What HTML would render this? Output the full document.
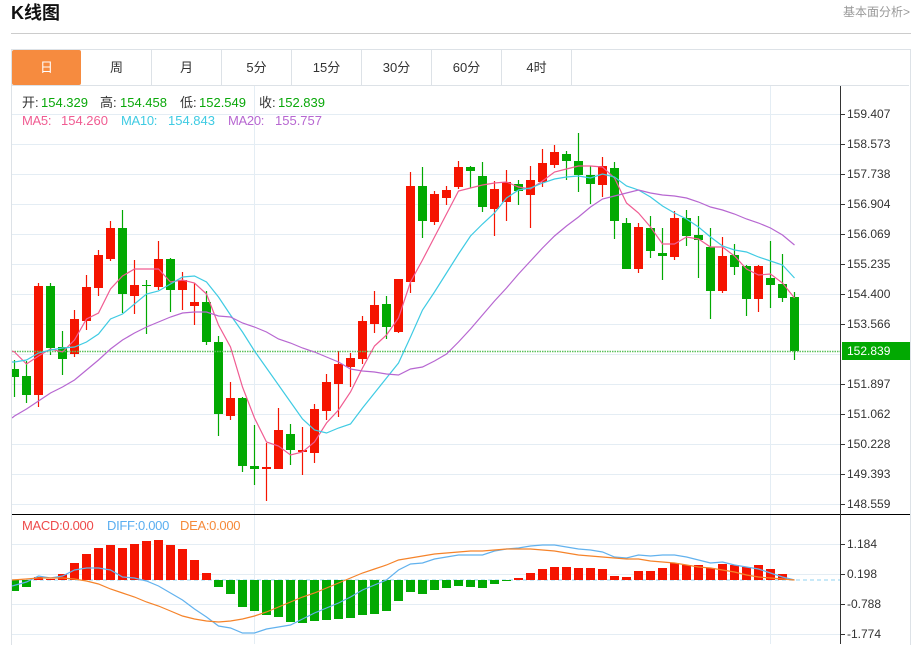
<!DOCTYPE html>
<html lang="zh">
<head>
<meta charset="utf-8">
<title>K线图</title>
<style>
html,body{margin:0;padding:0;background:#fff;width:916px;height:644px;overflow:hidden;font-family:"Liberation Sans","Noto Sans CJK SC",sans-serif;}
.abs{position:absolute;white-space:nowrap;}
.title{left:11px;top:1px;font-size:18px;line-height:24px;font-weight:bold;color:#111;}
.more{left:843px;top:4px;font-size:12px;line-height:16px;color:#999;}
.hr{left:11px;top:33px;width:900px;height:1px;background:#ccc;}
.panel{left:11px;top:49px;width:898px;height:595px;border:1px solid #dde2e7;border-bottom:none;}
.tabs{left:12px;top:50px;height:35px;width:897px;border-bottom:1px solid #dde2e7;}
.tab{position:absolute;top:0;width:69px;height:35px;line-height:35px;text-align:center;font-size:13px;color:#333;border-right:1px solid #dde2e7;}
.on{background:#f68b3f;color:#fff;border-radius:2px;border-right:none;}
.t{font-size:13px;line-height:16px;}
.n{letter-spacing:-0.3px;}
svg{position:absolute;left:0;top:0;}
</style>
</head>
<body>
<div class="abs title">K线图</div>
<div class="abs more">基本面分析&gt;</div>
<div class="abs hr"></div>
<div class="abs panel"></div>
<div class="abs tabs">
<div class="tab on" style="left:0">日</div>
<div class="tab" style="left:70px">周</div>
<div class="tab" style="left:140px">月</div>
<div class="tab" style="left:210px">5分</div>
<div class="tab" style="left:280px">15分</div>
<div class="tab" style="left:350px">30分</div>
<div class="tab" style="left:420px">60分</div>
<div class="tab" style="left:490px">4时</div>
</div>
<svg width="916" height="644" viewBox="0 0 916 644" xmlns="http://www.w3.org/2000/svg">
<defs><clipPath id="c"><rect x="12" y="86" width="828" height="558"/></clipPath></defs>
<path fill="none" stroke="#e4edf4" stroke-width="1" d="M12 114.500H840M12 144.500H840M12 174.500H840M12 204.500H840M12 234.500H840M12 264.500H840M12 294.500H840M12 324.500H840M12 354.500H840M12 384.500H840M12 414.500H840M12 444.500H840M12 474.500H840M12 504.500H840M12 544.500H840M12 574.500H840M12 604.500H840M12 634.500H840M254.500 86V644M770.500 86V644"/>
<g clip-path="url(#c)">
<path fill="none" stroke="#f51400" stroke-width="1.2" d="M38.500 283V407M74.500 310V357M86.500 275V330M98.500 250V296M110.500 221V261M134.500 260V314M158.500 241V290M182.500 272V310M194.500 283V325M230.500 382V420M266.500 443V501M278.500 408V469M302.500 427V475M314.500 404V463M326.500 374V420M338.500 351V417M350.500 353V387M362.500 316V364M374.500 291V333M398.500 279V333M410.500 172V293M434.500 191V225M446.500 186V205M458.500 161V189M494.500 181V236M506.500 170V221M530.500 166V228M542.500 149V187M554.500 145V168M602.500 157V197M638.500 223V273M674.500 211V260M722.500 237V293M758.500 265V312"/>
<path fill="#f51400" d="M34 286h9v109h-9zM70 319h9v35h-9zM82 287h9v34h-9zM94 255h9v33h-9zM106 228h9v31h-9zM130 285h9v11h-9zM154 259h9v28h-9zM178 280h9v10h-9zM190 302h9v4h-9zM226 398h9v18h-9zM262 467h9v2h-9zM274 430h9v39h-9zM298 450h9v2h-9zM310 409h9v44h-9zM322 382h9v29h-9zM334 364h9v20h-9zM346 358h9v9h-9zM358 321h9v38h-9zM370 305h9v19h-9zM394 279h9v53h-9zM406 186h9v96h-9zM430 194h9v28h-9zM442 190h9v8h-9zM454 167h9v20h-9zM490 189h9v20h-9zM502 182h9v20h-9zM526 180h9v15h-9zM538 163h9v19h-9zM550 152h9v13h-9zM598 166h9v19h-9zM634 227h9v42h-9zM670 218h9v39h-9zM718 256h9v35h-9zM754 266h9v33h-9z"/>
<path fill="none" stroke="#02a902" stroke-width="1.2" d="M14.500 360V397M26.500 361V403M50.500 283V355M62.500 331V375M122.500 210V313M146.500 280V334M170.500 258V312M206.500 291V345M218.500 336V436M242.500 397V472M254.500 425V485M290.500 424V465M386.500 296V339M422.500 167V238M470.500 166V188M482.500 162V212M518.500 180V205M566.500 151V180M578.500 133V192M590.500 166V204M614.500 162V239M626.500 218V269M650.500 216V258M662.500 228V280M686.500 210V246M698.500 216V278M710.500 228V319M734.500 244V275M746.500 265V316M770.500 241V308M782.500 254V302M794.500 292V360"/>
<path fill="#02a902" d="M10 369h9v8h-9zM22 376h9v19h-9zM46 286h9v62h-9zM58 347h9v12h-9zM118 228h9v66h-9zM142 285h9v1h-9zM166 259h9v31h-9zM202 302h9v40h-9zM214 342h9v72h-9zM238 398h9v68h-9zM250 466h9v3h-9zM286 434h9v16h-9zM382 304h9v23h-9zM418 186h9v35h-9zM466 167h9v4h-9zM478 176h9v31h-9zM514 184h9v7h-9zM562 154h9v7h-9zM574 161h9v14h-9zM586 175h9v9h-9zM610 168h9v53h-9zM622 223h9v46h-9zM646 228h9v23h-9zM658 253h9v3h-9zM682 218h9v18h-9zM694 235h9v5h-9zM706 247h9v44h-9zM730 255h9v12h-9zM742 266h9v33h-9zM766 278h9v7h-9zM778 284h9v14h-9zM790 297h9v54h-9z"/>
<path fill="none" stroke="#5cc05c" stroke-width="1.6" stroke-dasharray="1.5 1" d="M12 351.500H840"/>
<polyline fill="none" stroke="#f05c92" stroke-width="1.2" points="12,351 14.500,352 26.500,364 38.500,356 50.500,349 62.500,352 74.500,340 86.500,319 98.500,313 110.500,289 122.500,276 134.500,269 146.500,269 158.500,269 170.500,282 182.500,280 194.500,283 206.500,294 218.500,325 230.500,347 242.500,387 254.500,418 266.500,442 278.500,446 290.500,455 302.500,452 314.500,442 326.500,423 338.500,410 350.500,392 362.500,368 374.500,346 386.500,335 398.500,318 410.500,282 422.500,260 434.500,237 446.500,214 458.500,191 470.500,188 482.500,185 494.500,183 506.500,182 518.500,187 530.500,189 542.500,181 554.500,172 566.500,169 578.500,166 590.500,166 602.500,167 614.500,178 626.500,203 638.500,213 650.500,227 662.500,244 674.500,244 686.500,237 698.500,239 710.500,247 722.500,247 734.500,256 746.500,269 758.500,275 770.500,274 782.500,283 794.500,298"/>
<polyline fill="none" stroke="#3fcbe3" stroke-width="1.2" points="12,362 14.500,362 26.500,360 38.500,353 50.500,350 62.500,348 74.500,347 86.500,342 98.500,334 110.500,319 122.500,314 134.500,304 146.500,294 158.500,291 170.500,284 182.500,277 194.500,276 206.500,282 218.500,297 230.500,315 242.500,332 254.500,351 266.500,368 278.500,385 290.500,402 302.500,419 314.500,430 326.500,433 338.500,428 350.500,424 362.500,408 374.500,393 386.500,378 398.500,363 410.500,337 422.500,310 434.500,292 446.500,273 458.500,254 470.500,236 482.500,224 494.500,213 506.500,198 518.500,190 530.500,188 542.500,183 554.500,179 566.500,177 578.500,176 590.500,178 602.500,174 614.500,177 626.500,186 638.500,190 650.500,197 662.500,206 674.500,213 686.500,219 698.500,227 710.500,237 722.500,246 734.500,250 746.500,252 758.500,257 770.500,261 782.500,265 794.500,278"/>
<polyline fill="none" stroke="#b767d1" stroke-width="1.2" points="12,418 14.500,416 26.500,409 38.500,401 50.500,393 62.500,387 74.500,380 86.500,370 98.500,360 110.500,349 122.500,340 134.500,333 146.500,327 158.500,322 170.500,317 182.500,313 194.500,312 206.500,312 218.500,316 230.500,317 242.500,323 254.500,327 266.500,332 278.500,339 290.500,343 302.500,348 314.500,352 326.500,357 338.500,362 350.500,369 362.500,371 374.500,372 386.500,374 398.500,375 410.500,369 422.500,367 434.500,361 446.500,354 458.500,342 470.500,329 482.500,315 494.500,301 506.500,288 518.500,274 530.500,261 542.500,248 554.500,236 566.500,226 578.500,217 590.500,207 602.500,199 614.500,196 626.500,193 638.500,190 650.500,193 662.500,195 674.500,196 686.500,198 698.500,202 710.500,207 722.500,210 734.500,214 746.500,219 758.500,223 770.500,228 782.500,235 794.500,245"/>
<path fill="none" stroke="#b5e2f5" stroke-width="1.5" stroke-dasharray="4 3" d="M12 580H840"/>
<path fill="#f51400" d="M34 577h9v3h-9zM46 579h9v1h-9zM58 574h9v6h-9zM70 563h9v17h-9zM82 554h9v26h-9zM94 548h9v32h-9zM106 545h9v35h-9zM118 548h9v32h-9zM130 544h9v36h-9zM142 541h9v39h-9zM154 540h9v40h-9zM166 545h9v35h-9zM178 549h9v31h-9zM190 560h9v20h-9zM202 573h9v7h-9zM514 578h9v2h-9zM526 573h9v7h-9zM538 569h9v11h-9zM550 567h9v13h-9zM562 567h9v13h-9zM574 568h9v12h-9zM586 568h9v12h-9zM598 569h9v11h-9zM610 576h9v4h-9zM622 577h9v3h-9zM634 571h9v9h-9zM646 571h9v9h-9zM658 568h9v12h-9zM670 563h9v17h-9zM682 565h9v15h-9zM694 565h9v15h-9zM706 568h9v12h-9zM718 564h9v16h-9zM730 565h9v15h-9zM742 567h9v13h-9zM754 565h9v15h-9zM766 569h9v11h-9zM778 574h9v6h-9z"/>
<path fill="#02a902" d="M10 580h9v11h-9zM22 580h9v7h-9zM214 580h9v7h-9zM226 580h9v14h-9zM238 580h9v27h-9zM250 580h9v31h-9zM262 580h9v35h-9zM274 580h9v37h-9zM286 580h9v42h-9zM298 580h9v43h-9zM310 580h9v41h-9zM322 580h9v40h-9zM334 580h9v39h-9zM346 580h9v38h-9zM358 580h9v35h-9zM370 580h9v34h-9zM382 580h9v31h-9zM394 580h9v21h-9zM406 580h9v12h-9zM418 580h9v14h-9zM430 580h9v10h-9zM442 580h9v8h-9zM454 580h9v6h-9zM466 580h9v7h-9zM478 580h9v8h-9zM490 580h9v4h-9zM502 580h9v1h-9z"/>
<polyline fill="none" stroke="#62b2ee" stroke-width="1.2" points="12,586 26.500,582 38.500,576 50.500,578 62.500,576 74.500,570 86.500,568 98.500,568 110.500,570 122.500,577 134.500,578 146.500,581 158.500,586 170.500,593 182.500,600 194.500,609 206.500,617 218.500,626 230.500,628 242.500,633 254.500,633 266.500,629 278.500,627 290.500,625 302.500,619 314.500,613 326.500,608 338.500,603 350.500,597 362.500,590 374.500,585 386.500,580 398.500,570 410.500,564 422.500,563 434.500,559 446.500,557 458.500,555 470.500,555 482.500,555 494.500,551 506.500,549 518.500,548 530.500,546 542.500,545 554.500,545 566.500,547 578.500,549 590.500,550 602.500,552 614.500,557 626.500,558 638.500,555 650.500,556 662.500,555 674.500,555 686.500,557 698.500,560 710.500,563 722.500,562 734.500,565 746.500,567 758.500,569 770.500,573 782.500,577 794.500,580"/>
<polyline fill="none" stroke="#f5832a" stroke-width="1.2" points="12,580 26.500,579 38.500,578 50.500,578 62.500,578 74.500,579 86.500,581 98.500,584 110.500,589 122.500,593 134.500,597 146.500,602 158.500,606 170.500,611 182.500,616 194.500,619 206.500,621 218.500,622 230.500,621 242.500,619 254.500,616 266.500,612 278.500,607 290.500,602 302.500,597 314.500,593 326.500,588 338.500,583 350.500,578 362.500,573 374.500,569 386.500,565 398.500,560 410.500,558 422.500,556 434.500,554 446.500,553 458.500,552 470.500,551 482.500,551 494.500,550 506.500,549 518.500,549 530.500,549 542.500,550 554.500,551 566.500,553 578.500,555 590.500,556 602.500,557 614.500,558 626.500,559 638.500,559 650.500,561 662.500,562 674.500,563 686.500,565 698.500,567 710.500,568 722.500,570 734.500,572 746.500,575 758.500,577 770.500,578 782.500,579 794.500,580"/>
</g>
<path fill="none" stroke="#000" stroke-width="1" d="M12 514.500H910"/>
<path fill="none" stroke="#333" stroke-width="1" d="M840.500 86V644M840 114.500h5M840 144.500h5M840 174.500h5M840 204.500h5M840 234.500h5M840 264.500h5M840 294.500h5M840 324.500h5M840 384.500h5M840 414.500h5M840 444.500h5M840 474.500h5M840 504.500h5M840 544.500h5M840 574.500h5M840 604.500h5M840 634.500h5"/>
<rect x="842" y="342" width="68" height="18" fill="#02a902"/>
<g font-family="'Liberation Sans','Noto Sans CJK SC',sans-serif" font-size="12" fill="#333">
<text x="847" y="118">159.407</text>
<text x="847" y="148">158.573</text>
<text x="847" y="178">157.738</text>
<text x="847" y="208">156.904</text>
<text x="847" y="238">156.069</text>
<text x="847" y="268">155.235</text>
<text x="847" y="298">154.400</text>
<text x="847" y="328">153.566</text>
<text x="847" y="355" fill="#fff">152.839</text>
<text x="847" y="388">151.897</text>
<text x="847" y="418">151.062</text>
<text x="847" y="448">150.228</text>
<text x="847" y="478">149.393</text>
<text x="847" y="508">148.559</text>
<text x="847" y="548">1.184</text>
<text x="847" y="578">0.198</text>
<text x="847" y="608">-0.788</text>
<text x="847" y="638">-1.774</text>
</g>
</svg>
<div class="abs t" style="left:22px;top:95px;color:#333">开:</div>
<div class="abs t" style="left:41px;top:95px;color:#0aa80a">154.329</div>
<div class="abs t" style="left:100px;top:95px;color:#333">高:</div>
<div class="abs t" style="left:120px;top:95px;color:#0aa80a">154.458</div>
<div class="abs t" style="left:180px;top:95px;color:#333">低:</div>
<div class="abs t" style="left:199px;top:95px;color:#0aa80a">152.549</div>
<div class="abs t" style="left:259px;top:95px;color:#333">收:</div>
<div class="abs t" style="left:278px;top:95px;color:#0aa80a">152.839</div>
<div class="abs t n" style="left:22px;top:113px;color:#f05c92">MA5:</div>
<div class="abs t" style="left:61px;top:113px;color:#f05c92">154.260</div>
<div class="abs t n" style="left:121px;top:113px;color:#3fcbe3">MA10:</div>
<div class="abs t" style="left:168px;top:113px;color:#3fcbe3">154.843</div>
<div class="abs t n" style="left:228px;top:113px;color:#b767d1">MA20:</div>
<div class="abs t" style="left:275px;top:113px;color:#b767d1">155.757</div>
<div class="abs t n" style="left:22px;top:518px;color:#ee4b4b">MACD:0.000</div>
<div class="abs t n" style="left:107px;top:518px;color:#5aaef0">DIFF:0.000</div>
<div class="abs t n" style="left:180px;top:518px;color:#f58a3a">DEA:0.000</div>
</body>
</html>
